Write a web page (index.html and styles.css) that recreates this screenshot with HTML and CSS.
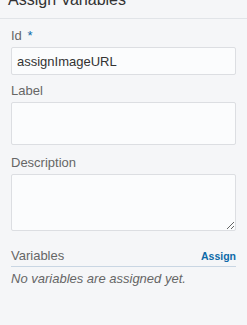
FILE: index.html
```html
<!DOCTYPE html>
<html>
<head>
<meta charset="utf-8">
<link rel="stylesheet" href="styles.css">
</head>
<body>
<div class="panel">
  <div class="header"><h2 class="title">Assign Variables</h2></div>
  <div class="form">
    <label class="field-label">Id <span class="req">*</span></label>
    <input class="input" type="text" value="assignImageURL">
    <label class="field-label">Label</label>
    <textarea class="input label-area"></textarea>
    <label class="field-label">Description</label>
    <textarea class="input desc-area"></textarea>
    <div class="vars-head">
      <span class="vars-title">Variables</span>
      <a class="assign">Assign</a>
    </div>
    <div class="empty">No variables are assigned yet.</div>
  </div>
</div>
</body>
</html>
```
FILE: styles.css
```css
html, body {
  margin: 0;
  padding: 0;
  background: #f5f6f8;
  font-family: "Liberation Sans", Arial, sans-serif;
}
.panel {
  width: 247px;
  height: 325px;
  overflow: hidden;
}
.header {
  height: 18px;
  border-bottom: 1px solid #e1e4e8;
  overflow: hidden;
  padding-left: 8px;
}
.title {
  margin: -10px 0 0 0;
  font-size: 16px;
  line-height: 20px;
  font-weight: normal;
  color: #333;
}
.form {
  padding: 9px 11px 0 11px;
  display: flex;
  flex-direction: column;
}
.field-label {
  font-size: 13px;
  line-height: 16px;
  color: #666;
  display: block;
}
.req {
  color: #0d6aa8;
  font-size: 13px;
  margin-left: 2px;
}
.input {
  box-sizing: border-box;
  width: 225px;
  margin: 3px 0 8px 0;
  border: 1px solid #dcdee2;
  border-radius: 2px;
  background: #fbfcfd;
  font-family: "Liberation Sans", Arial, sans-serif;
  font-size: 13px;
  color: #333;
  padding: 0 5px;
  outline: none;
}
input.input {
  height: 28px;
}
.label-area {
  height: 43px;
  resize: none;
  margin-bottom: 10px;
}
.desc-area {
  height: 57px;
  resize: vertical;
  margin-bottom: 17px;
}
.vars-head {
  display: flex;
  justify-content: space-between;
  align-items: baseline;
  border-bottom: 1px solid #c9d6e3;
  padding-bottom: 2px;
}
.vars-title {
  font-size: 13px;
  line-height: 16px;
  color: #666;
}
.assign {
  font-size: 10.5px;
  font-weight: bold;
  color: #0d6aa8;
}
.empty {
  margin-top: 4px;
  font-size: 13px;
  line-height: 16px;
  font-style: italic;
  color: #666;
}
```
